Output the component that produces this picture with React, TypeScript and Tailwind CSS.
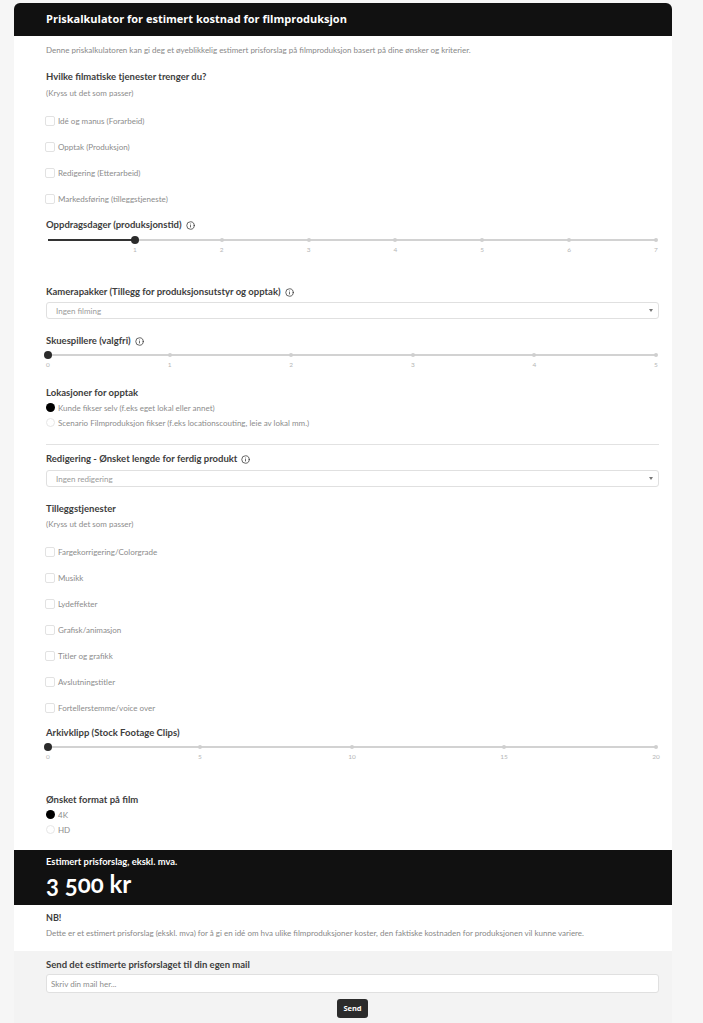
import { Info } from "lucide-react";

const body = "font-['Lato','Open_Sans',sans-serif]";

function Heading({ children, info, className = "" }: { children: string; info?: boolean; className?: string }) {
  return (
    <div className={`flex items-center gap-[3px] h-[14px] text-[9.5px] font-bold leading-[14px] text-[#3d3d3d] ${className}`}>
      <span>{children}</span>
      {info && <Info size={9} strokeWidth={2} className="ml-[1px] text-[#333]" />}
    </div>
  );
}

function Hint({ className = "" }: { className?: string }) {
  return <div className={`h-[12px] text-[8px] leading-[12px] text-[#8c8c8c] ${className}`}>(Kryss ut det som passer)</div>;
}

function Check({ label }: { label: string }) {
  return (
    <label className="flex h-[26px] items-center gap-[3px] text-[8px] text-[#8c8c8c]">
      <span className="-ml-[1px] h-[10px] w-[10px] rounded-[2px] border border-[#e2e2e2] bg-white" />
      {label}
    </label>
  );
}

function Radio({ label, on }: { label: string; on?: boolean }) {
  return (
    <label className="flex h-[15px] items-center gap-[3px] text-[8px] text-[#8c8c8c]">
      <span className={`h-[9px] w-[9px] rounded-full ${on ? "bg-black" : "border border-[#e6e6e6] bg-white"}`} />
      {label}
    </label>
  );
}

function Slider({ marks, value, hideFirst }: { marks: number[]; value: number; hideFirst?: boolean }) {
  const pct = ((value - marks[0]) / (marks[marks.length - 1] - marks[0])) * 100;
  return (
    <div className="pl-[2px] pr-[3px]">
      <div className="relative h-[8px]">
        <div className="absolute inset-x-0 top-[3px] h-[2px] rounded-full bg-[#d2d2d2]" />
        <div className="absolute left-0 top-[3px] h-[2px] bg-[#333]" style={{ width: `${pct}%` }} />
        <div className="absolute inset-x-0 top-0 flex justify-between">
          {marks.map((m) => (
            <span key={m} className="relative w-0">
              {!(hideFirst && m === marks[0]) && (
                <span
                  className={
                    m === value
                      ? "absolute -left-[4px] top-0 h-[8px] w-[8px] rounded-full bg-[#2b2b2b]"
                      : "absolute -left-[2px] top-[2px] h-[4px] w-[4px] rounded-full bg-[#cfcfcf]"
                  }
                />
              )}
            </span>
          ))}
        </div>
      </div>
      <div className="mt-[1px] flex justify-between text-[6.5px] leading-[10px] text-[#b5b5b5]">
        {marks.map((m) => (
          <span key={m} className="relative w-0">
            {!(hideFirst && m === marks[0]) && <span className="absolute -translate-x-1/2">{m}</span>}
          </span>
        ))}
      </div>
    </div>
  );
}

function Select({ label }: { label: string }) {
  return (
    <div className="flex h-[17px] items-center justify-between rounded-[3px] border border-[#e0e0e0] bg-white pl-[9px] pr-[5px] text-[8px] text-[#9a9a9a]">
      <span>{label}</span>
      <svg width="4" height="3" viewBox="0 0 4 3">
        <path d="M0 0h4L2 3z" fill="#777" />
      </svg>
    </div>
  );
}

export default function App() {
  return (
    <div className={`min-h-[1023px] bg-[#f6f6f6] pl-[14px] pr-[31px] pt-[3px] ${body}`}>
      <div className="flex h-[33px] items-center rounded-t-[6px] bg-[#111111] pl-[32px] font-['Open_Sans',sans-serif] text-[11px] font-bold text-white">
        Priskalkulator for estimert kostnad for filmproduksjon
      </div>

      <div className="bg-white pl-[32px] pr-[13px] pt-[8px]">
        <p className="h-[12px] text-[8px] leading-[12px] text-[#888]">
          Denne priskalkulatoren kan gi deg et øyeblikkelig estimert prisforslag på filmproduksjon basert på dine ønsker og kriterier.
        </p>
        <Heading className="mt-[14px]">Hvilke filmatiske tjenester trenger du?</Heading>
        <Hint className="mt-[3px]" />
        <div className="mt-[9px]">
          <Check label="Idé og manus (Forarbeid)" />
          <Check label="Opptak (Produksjon)" />
          <Check label="Redigering (Etterarbeid)" />
          <Check label="Markedsføring (tilleggstjeneste)" />
        </div>
        <Heading className="mt-[6px]" info>
          Oppdragsdager (produksjonstid)
        </Heading>
        <div className="mt-[4px]">
          <Slider marks={[0, 1, 2, 3, 4, 5, 6, 7]} value={1} hideFirst />
        </div>

        <Heading className="mt-[40px]" info>
          Kamerapakker (Tillegg for produksjonsutstyr og opptak)
        </Heading>
        <div className="mt-[3px]">
          <Select label="Ingen filming" />
        </div>
        <Heading className="mt-[15px]" info>
          Skuespillere (valgfri)
        </Heading>
        <div className="mt-[3px]">
          <Slider marks={[0, 1, 2, 3, 4, 5]} value={0} />
        </div>

        <Heading className="mt-[26px]">Lokasjoner for opptak</Heading>
        <div>
          <Radio label="Kunde fikser selv (f.eks eget lokal eller annet)" on />
          <Radio label="Scenario Filmproduksjon fikser (f.eks locationscouting, leie av lokal mm.)" />
        </div>
        <hr className="mt-[14px] border-t border-[#e2e2e2]" />
        <Heading className="mt-[7px]" info>
          Redigering - Ønsket lengde for ferdig produkt
        </Heading>
        <div className="mt-[4px]">
          <Select label="Ingen redigering" />
        </div>

        <Heading className="mt-[15px]">Tilleggstjenester</Heading>
        <Hint className="mt-[2px]" />
        <div className="mt-[9px]">
          <Check label="Fargekorrigering/Colorgrade" />
          <Check label="Musikk" />
          <Check label="Lydeffekter" />
          <Check label="Grafisk/animasjon" />
          <Check label="Titler og grafikk" />
          <Check label="Avslutningstitler" />
          <Check label="Fortellerstemme/voice over" />
        </div>
        <Heading className="mt-[5px]">Arkivklipp (Stock Footage Clips)</Heading>
        <div className="mt-[3px]">
          <Slider marks={[0, 5, 10, 15, 20]} value={0} />
        </div>

        <Heading className="mt-[41px]">Ønsket format på film</Heading>
        <div className="pb-[13px]">
          <Radio label="4K" on />
          <Radio label="HD" />
        </div>
      </div>

      <div className="h-[55px] bg-[#111111] pl-[32px] pt-[6px] text-white">
        <div className="text-[9.4px] font-bold leading-[12px]">Estimert prisforslag, ekskl. mva.</div>
        <div className="mt-[2px] text-[24px] font-bold leading-[28px] [font-variant-numeric:oldstyle-nums]">3 500 kr</div>
      </div>

      <div className="h-[46px] bg-white pl-[32px] pt-[7px]">
        <div className="text-[9px] font-bold leading-[12px] text-[#3d3d3d]">NB!</div>
        <p className="mt-[3px] text-[8px] leading-[12px] text-[#888]">
          Dette er et estimert prisforslag (ekskl. mva) for å gi en idé om hva ulike filmproduksjoner koster, den faktiske kostnaden for produksjonen vil kunne variere.
        </p>
      </div>

      <div className="bg-[#f3f3f3] pl-[32px] pr-[13px] pt-[7px] pb-[5px]">
        <Heading>Send det estimerte prisforslaget til din egen mail</Heading>
        <div className="mt-[2px] flex h-[19px] items-center rounded-[3px] border border-[#e0e0e0] bg-white pl-[4px] text-[8px] text-[#8c8c8c]">
          Skriv din mail her...
        </div>
        <div className="mt-[6px] flex justify-center">
          <button className="h-[19px] w-[31px] rounded-[3px] bg-[#2b2b2b] font-['Open_Sans',sans-serif] text-[7.5px] font-bold text-white">
            Send
          </button>
        </div>
      </div>
    </div>
  );
}
